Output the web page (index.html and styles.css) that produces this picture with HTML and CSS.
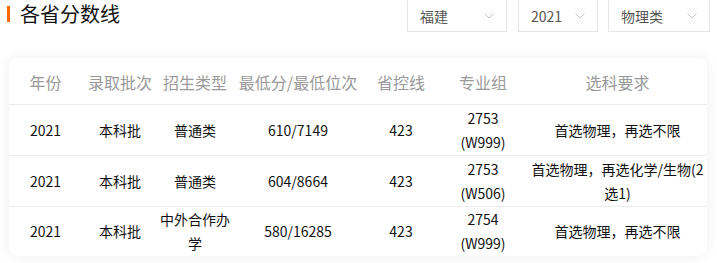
FILE: index.html
```html
<!DOCTYPE html>
<html lang="zh">
<head>
<meta charset="utf-8">
<link rel="stylesheet" href="styles.css">
</head>
<body>
<div class="page">
  <div class="topbar">
    <h2 class="title">各省分数线</h2>
    <div class="filters">
      <div class="select sel-prov"><span>福建</span><svg class="chev" width="10" height="6" viewBox="0 0 10 6"><path d="M0.5 0.5 L5 5 L9.5 0.5" fill="none" stroke="#c0c4cc" stroke-width="1"/></svg></div>
      <div class="select sel-year"><span>2021</span><svg class="chev" width="10" height="6" viewBox="0 0 10 6"><path d="M0.5 0.5 L5 5 L9.5 0.5" fill="none" stroke="#c0c4cc" stroke-width="1"/></svg></div>
      <div class="select sel-type"><span>物理类</span><svg class="chev" width="10" height="6" viewBox="0 0 10 6"><path d="M0.5 0.5 L5 5 L9.5 0.5" fill="none" stroke="#c0c4cc" stroke-width="1"/></svg></div>
    </div>
  </div>
  <div class="card">
    <table class="score-table">
      <colgroup>
        <col class="c1"><col class="c2"><col class="c3"><col class="c4"><col class="c5"><col class="c6"><col class="c7">
      </colgroup>
      <thead>
        <tr><th>年份</th><th>录取批次</th><th>招生类型</th><th>最低分/最低位次</th><th>省控线</th><th>专业组</th><th>选科要求</th></tr>
      </thead>
      <tbody>
        <tr><td>2021</td><td>本科批</td><td>普通类</td><td>610/7149</td><td>423</td><td class="grp">2753 (W999)</td><td>首选物理，再选不限</td></tr>
        <tr><td>2021</td><td>本科批</td><td>普通类</td><td>604/8664</td><td>423</td><td class="grp">2753 (W506)</td><td>首选物理，再选化学/生物(2选1)</td></tr>
        <tr><td>2021</td><td>本科批</td><td>中外合作办学</td><td>580/16285</td><td>423</td><td class="grp">2754 (W999)</td><td>首选物理，再选不限</td></tr>
      </tbody>
    </table>
  </div>
</div>
</body>
</html>
```
FILE: styles.css
```css
* { box-sizing: border-box; }
html, body { margin: 0; padding: 0; background: #fff; }
body {
  font-family: "Noto Sans CJK SC", "Noto Sans", sans-serif;
  color: #222;
  width: 717px;
  height: 263px;
  overflow: hidden;
}
.page { padding: 0 7px 0 7px; }
.topbar {
  display: flex;
  justify-content: space-between;
  align-items: flex-start;
  height: 32px;
}
.title {
  margin: 0;
  font-size: 20px;
  font-weight: 400;
  line-height: 28px;
  color: #111;
  display: flex;
  align-items: center;
  gap: 10px;
}
.title::before {
  content: "";
  display: block;
  width: 3px;
  height: 16px;
  background: #ff6a00;
}
.filters { display: flex; gap: 11px; }
.select {
  height: 32px;
  border: 1px solid #e6e6e6;
  display: flex;
  align-items: center;
  justify-content: space-between;
  padding: 0 12px 0 12px;
  font-size: 14px;
  color: #555;
  background: #fff;
  border-top-color: #fff;
}
.sel-prov { width: 100px; }
.sel-year { width: 80px; margin-right: -1px; }
.sel-type { width: 102px; }
.chev { display: block; }
.card {
  margin: 26px 0 0 2px;
  width: 698px;
  background: #fff;
  border-radius: 8px;
  box-shadow: 0 0 14px rgba(0, 0, 0, 0.07);
  overflow: hidden;
}
.score-table {
  width: 698px;
  border-collapse: collapse;
  table-layout: fixed;
}
.c1 { width: 73px; }
.c2 { width: 76px; }
.c3 { width: 74px; }
.c4 { width: 132px; }
.c5 { width: 74px; }
.c6 { width: 90px; }
.c7 { width: 179px; }
.score-table th {
  height: 46px;
  font-size: 16px;
  font-weight: 400;
  color: #999;
  text-align: center;
  padding: 2px 0 0 0;
  white-space: nowrap;
  border-bottom: 1px solid #ececec;
}
.score-table td {
  height: 51px;
  font-size: 14px;
  line-height: 24px;
  text-align: center;
  color: #111;
  padding: 0 2px;
  border-bottom: 1px solid #ececec;
  vertical-align: middle;
}
.score-table tbody tr:last-child td { border-bottom: none; height: 50px; }
.score-table td.grp { padding: 0 12px; }
```
